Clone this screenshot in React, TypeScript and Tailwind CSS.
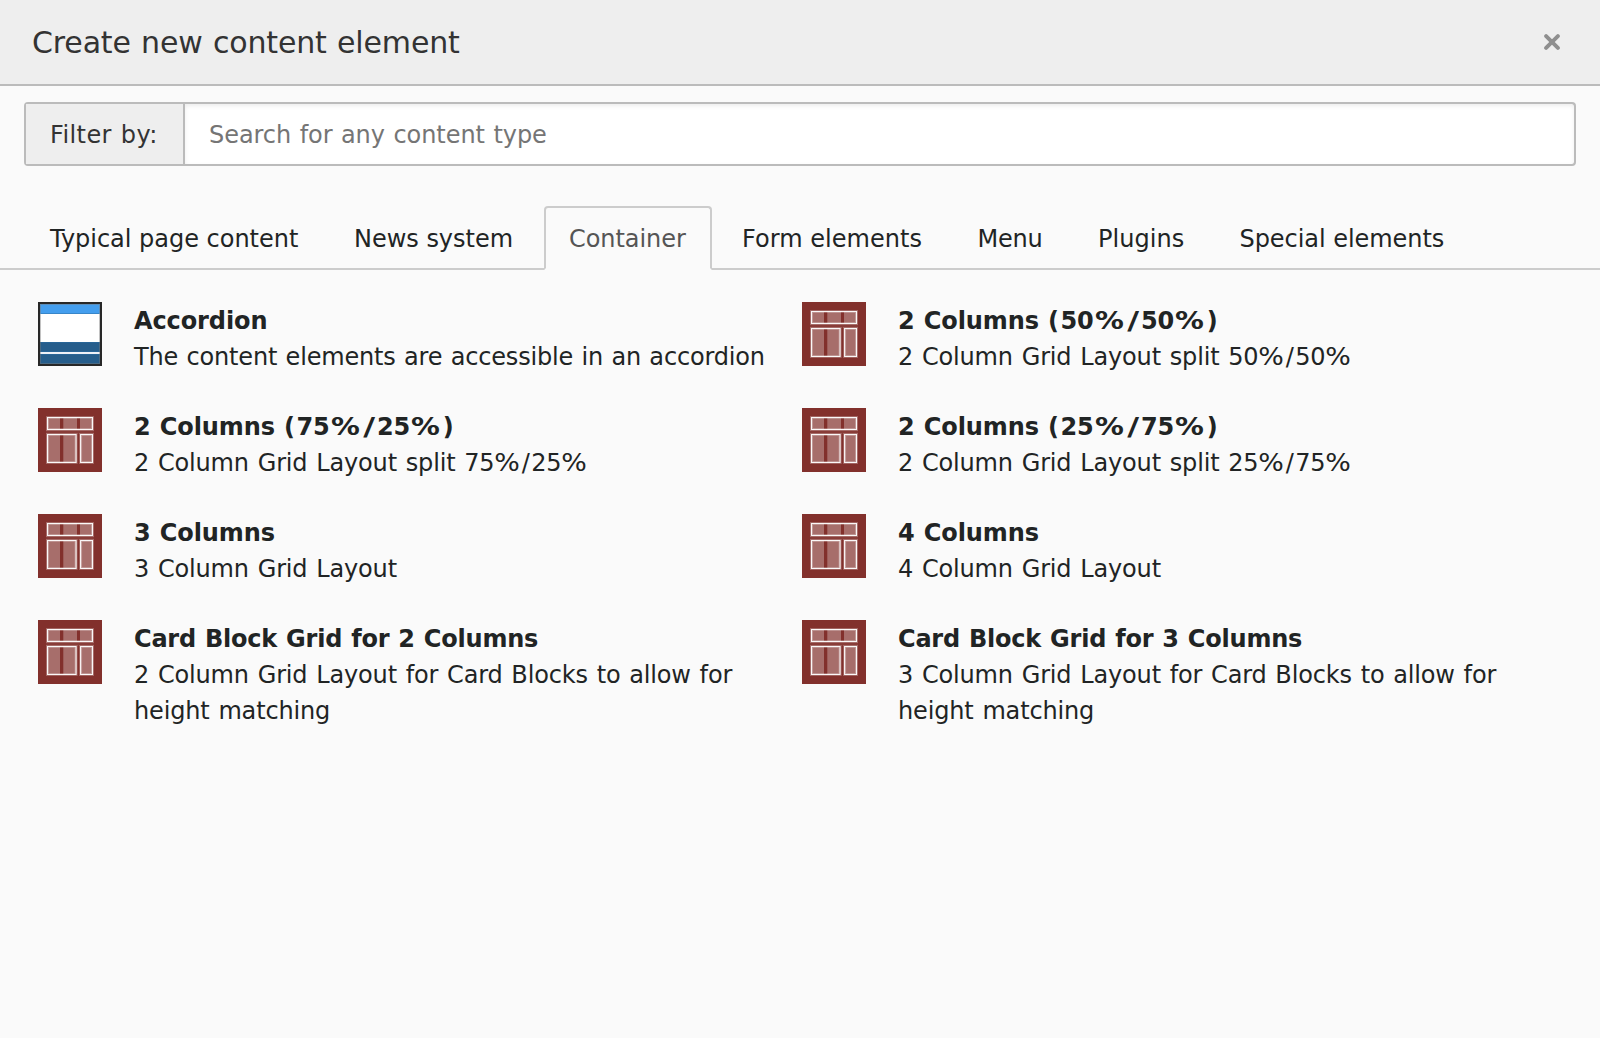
import React from "react";

const tabs = [
  { label: "Typical page content", box: "w-[300px] mr-[4px] pl-6", fit: "tracking-[-0.02px]" },
  { label: "News system", box: "w-[211.5px] mr-[4px] pl-6", fit: "tracking-[-0.02px]" },
  { label: "Container", box: "w-[168.5px] mr-[4px] pl-[23.5px]", fit: "tracking-[-0.06px]" },
  { label: "Form elements", box: "w-[231.5px] mr-[4px] pl-6", fit: "tracking-[0.03px]" },
  { label: "Menu", box: "w-[116.5px] mr-[4px] pl-6", fit: "tracking-[-0.2px]" },
  { label: "Plugins", box: "w-[137.5px] mr-[4px] pl-6", fit: "tracking-[0.05px]" },
  { label: "Special elements", box: "w-[256px] pl-6", fit: "tracking-[-0.05px]" },
];

const plain = "tracking-[-0.1px]";
const card = "tracking-[-0.22px]";
const desc = "tracking-[-0.15px] [word-spacing:1.3px]";

const items = [
  {
    title: "Accordion",
    text: "The content elements are accessible in an accordion",
    accordion: true,
    titleFit: plain,
    textFit: "tracking-[-0.17px]",
  },
  { title: "2 Columns (50%/50%)", text: "2 Column Grid Layout split 50%/50%", titleFit: plain, textFit: desc },
  { title: "2 Columns (75%/25%)", text: "2 Column Grid Layout split 75%/25%", titleFit: plain, textFit: desc },
  { title: "2 Columns (25%/75%)", text: "2 Column Grid Layout split 25%/75%", titleFit: plain, textFit: desc },
  { title: "3 Columns", text: "3 Column Grid Layout", titleFit: plain, textFit: desc },
  { title: "4 Columns", text: "4 Column Grid Layout", titleFit: plain, textFit: desc },
  {
    title: "Card Block Grid for 2 Columns",
    text: "2 Column Grid Layout for Card Blocks to allow for height matching",
    titleFit: card,
    textFit: desc,
  },
  {
    title: "Card Block Grid for 3 Columns",
    text: "3 Column Grid Layout for Card Blocks to allow for height matching",
    titleFit: card,
    textFit: desc,
  },
];

const wideBold: Record<string, string> = {
  "%": "inline-block px-[3.5px] scale-x-[1.2]",
  "/": "inline-block px-[3.9px] scale-x-[1.35]",
  "(": "pr-[1.5px]",
  ")": "pl-[1.5px]",
};

const wideRegular: Record<string, string> = {
  "%": "inline-block px-[1.6px] scale-x-[1.12]",
  "/": "px-[1.5px]",
};

function Ratio({ text, bold }: { text: string; bold?: boolean }) {
  const styles = bold ? wideBold : wideRegular;
  return (
    <>
      {text.split(/([%/()])/).map((part, i) =>
        styles[part] ? (
          <span key={i} className={styles[part]}>
            {part}
          </span>
        ) : (
          part
        ),
      )}
    </>
  );
}

function GridIcon() {
  return (
    <svg className="size-16 shrink-0" viewBox="0 0 64 64">
      <rect width="64" height="64" fill="#82302c" />
      <g fill="#fff" fillOpacity="0.3">
        <path d="M8 22h48v4H8z" fillOpacity="0.06" />
        <path d="M9.5 9.5H22v12H9.5zM25.3 9.5H39v12H25.3zM42 9.5h12.5v12H42z" />
        <path d="M9.5 26.5H22v28H9.5zM25.3 26.5h12.7v28H25.3zM42.5 26.5h12v28h-12z" />
      </g>
      <g fill="none" stroke="#fff">
        <path d="M9.5 9.5h45v12h-45zM9.5 26.5h28.6v28H9.5zM42.6 26.5h11.9v28H42.6z" strokeWidth="3" strokeOpacity="0.25" />
        <path d="M9.5 9.5h45v12h-45zM9.5 26.5h28.6v28H9.5zM42.6 26.5h11.9v28H42.6z" strokeWidth="1.1" strokeOpacity="0.95" />
      </g>
    </svg>
  );
}

function AccordionIcon() {
  return (
    <svg className="size-16 shrink-0" viewBox="0 0 64 64">
      <rect width="64" height="64" fill="#272727" />
      <rect x="2" y="2" width="60" height="60" fill="#fff" />
      <rect x="2" y="2" width="60" height="10" fill="#449eee" />
      <rect x="2" y="40" width="60" height="10" fill="#265d8b" />
      <rect x="2" y="50" width="60" height="2" fill="#eef1f8" />
      <rect x="2" y="52" width="60" height="10" fill="#265d8b" />
      <rect x="2.5" y="2.5" width="59" height="59" fill="none" stroke="#777" strokeOpacity="0.45" />
      <path d="M3 11.5h58M3 40.5h58M3 49.5h58M3 52.5h58" stroke="#2b6da4" strokeOpacity="0.5" />
    </svg>
  );
}

export default function App() {
  return (
    <div className="flex h-[1038px] w-[1600px] flex-col overflow-hidden bg-[#fafafa] font-['Verdana','DejaVu_Sans',sans-serif] text-[24px] leading-[36px] text-[#212424] [word-spacing:0.9px]">
      <header className="flex h-[86px] shrink-0 items-center justify-between border-b-2 border-[#bbb] bg-[#eee] pr-[40px] pl-8">
        <h1 className="pt-[2px] text-[30px] tracking-[-0.15px] text-[#333]">Create new content element</h1>
        <button aria-label="Close" className="text-[#8f8f8f]">
          <svg className="size-[16px]" viewBox="0 0 16 16" fill="none" stroke="currentColor" strokeWidth="3.9" strokeLinecap="round">
            <path d="M2.1 2.1l11.8 11.8M13.9 2.1L2.1 13.9" />
          </svg>
        </button>
      </header>

      <div className="mx-6 mt-4 flex h-16 shrink-0 rounded-[4px] border-2 border-[#bbb] bg-white">
        <label
          htmlFor="filter"
          className="flex w-[159px] shrink-0 items-center border-r-2 border-[#bbb] bg-[#eee] pt-[2px] pl-6 tracking-[0.4px] text-[#333]"
        >
          Filter by:
        </label>
        <input
          id="filter"
          placeholder="Search for any content type"
          className="min-w-0 flex-1 px-6 pt-[2px] tracking-[-0.05px] shadow-[inset_0_2px_4px_rgba(0,0,0,0.075)] outline-none [word-spacing:0.9px] placeholder:text-[#757575]"
        />
      </div>

      <nav className="mt-10 flex h-16 shrink-0 border-b-2 border-[#ccc] pl-6">
        {tabs.map((tab) => (
          <button
            key={tab.label}
            className={`${tab.box} ${tab.fit} h-16 shrink-0 rounded-t-[4px] border-2 pt-[2px] text-left whitespace-nowrap ${
              tab.label === "Container" ? "border-[#ccc] border-b-[#fafafa] text-[#555]" : "border-transparent border-b-[#ccc]"
            }`}
          >
            {tab.label}
          </button>
        ))}
      </nav>

      <main className="mt-8 grid grid-cols-[764px_764px] gap-y-[33px] pl-[38px]">
        {items.map((item) => (
          <a key={item.title} className="flex gap-8">
            {item.accordion ? <AccordionIcon /> : <GridIcon />}
            <div className="w-[640px] pt-px">
              <strong className={`block h-9 font-bold ${item.titleFit}`}>
                <Ratio text={item.title} bold />
              </strong>
              <p className={item.textFit}>
                <Ratio text={item.text} />
              </p>
            </div>
          </a>
        ))}
      </main>
    </div>
  );
}
